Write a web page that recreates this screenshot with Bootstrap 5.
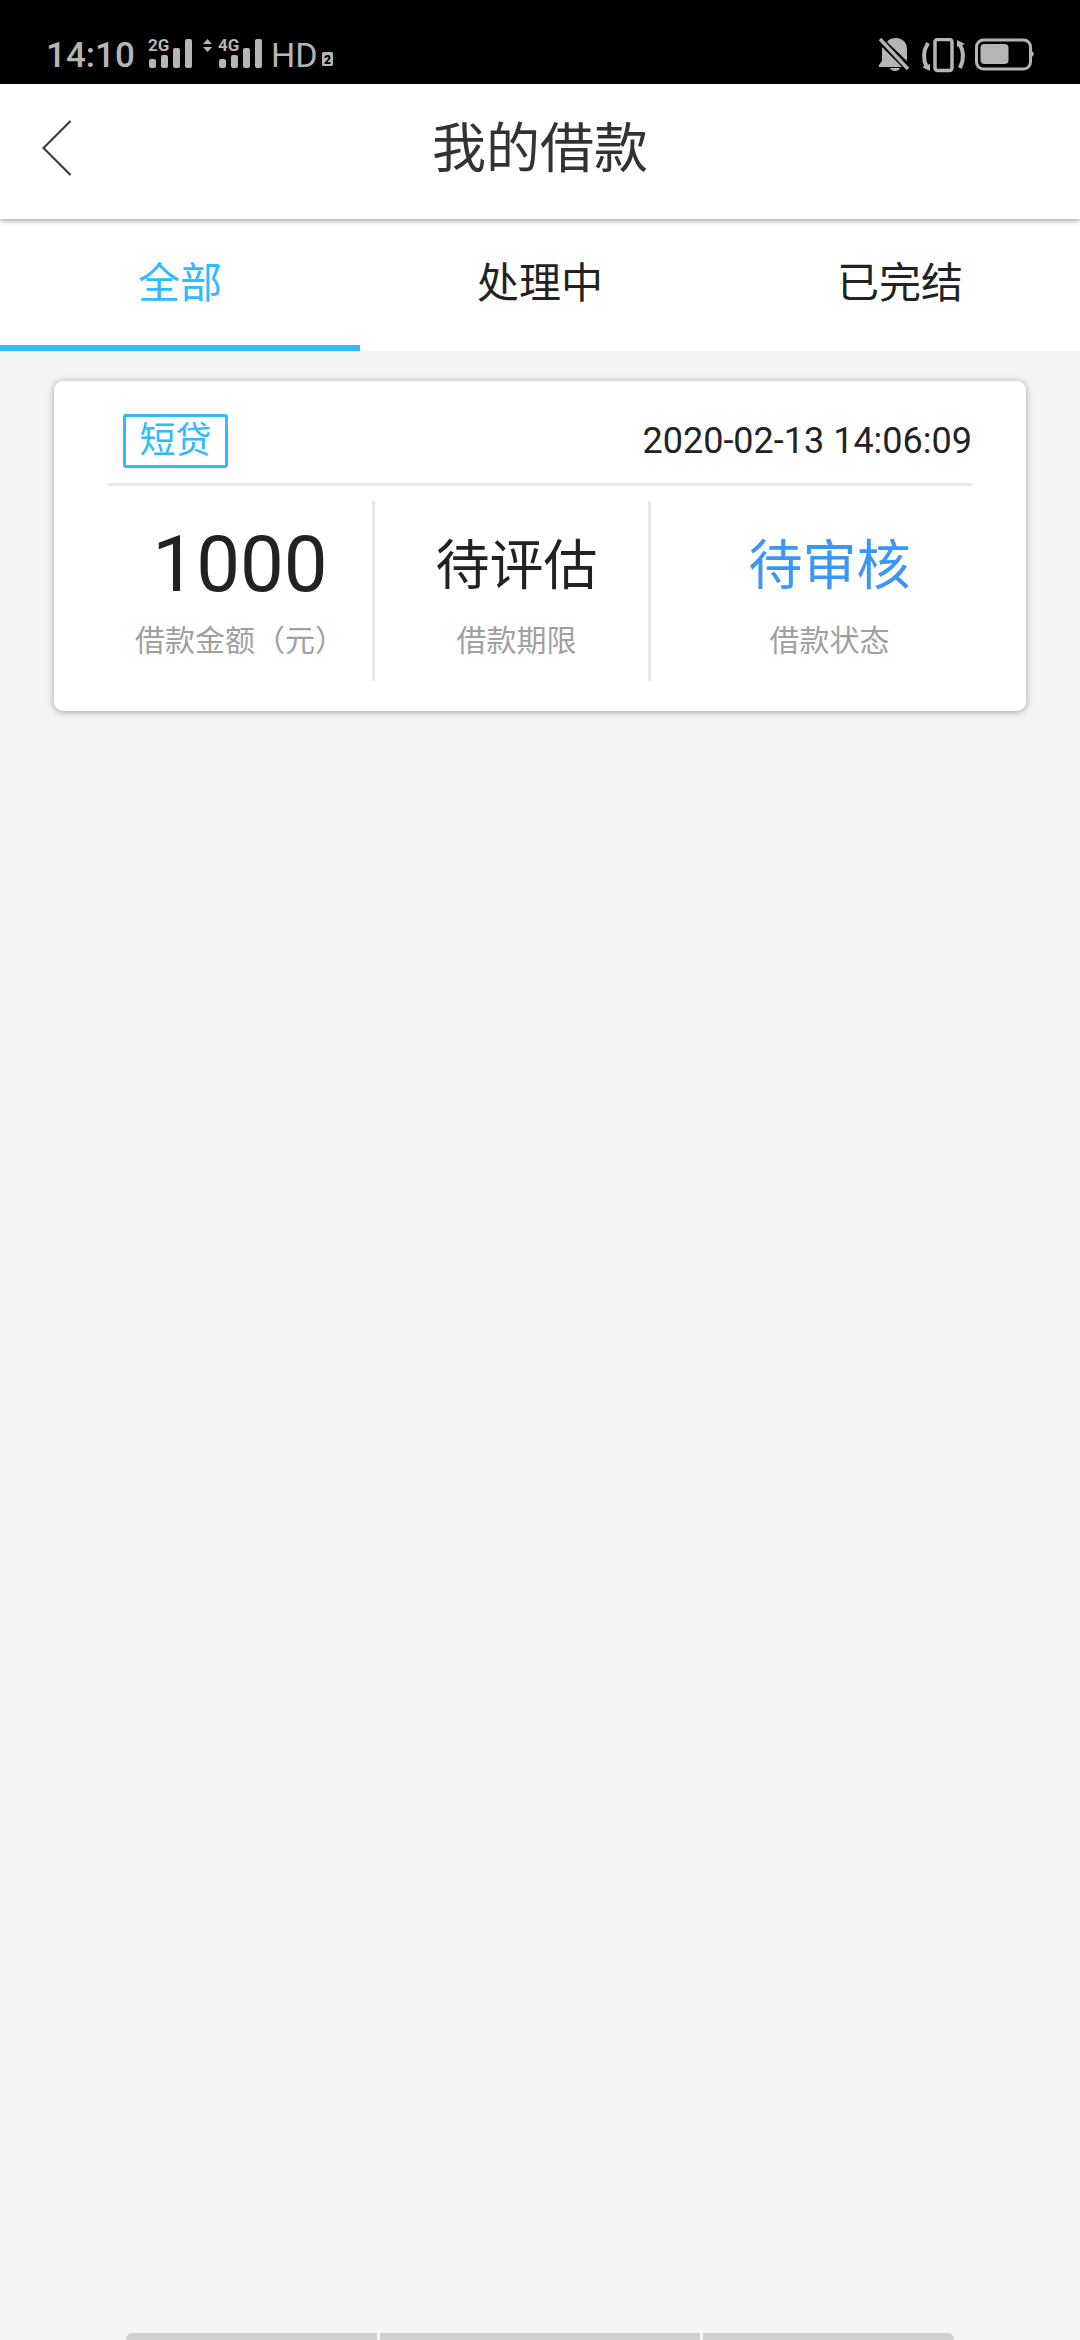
<!DOCTYPE html>
<html lang="zh-CN">
<head>
  <meta charset="UTF-8">
  <title>我的借款</title>
  <meta name="viewport" content="width=device-width, initial-scale=1">
  <link href="https://cdn.jsdelivr.net/npm/bootstrap@5.3.0/dist/css/bootstrap.min.css" rel="stylesheet">
  <style>
    body {
      background-color: #f4f4f4;
      font-family: Roboto, "Noto Sans CJK SC", sans-serif;
      height: 2340px;
      overflow: hidden;
    }
    .status-bar {
      height: 84px;
      background-color: #000;
      color: #b5b5b5;
      padding: 38px 45px 0 46px;
    }
    .status-time {
      font-size: 35px;
      font-weight: 500;
      line-height: 35px;
      width: 102px;
    }
    .signal-icon {
      margin-top: -10px;
    }
    .signal-next {
      margin-left: 6px;
    }
    .status-hd {
      font-size: 34px;
      line-height: 35px;
      margin-left: 8px;
    }
    .title-bar {
      height: 135px;
      background-color: #fff;
      box-shadow: 0 2px 5px rgba(0,0,0,.35);
      z-index: 2;
    }
    .back-btn {
      left: 42px;
      top: 36px;
    }
    .title-text {
      font-size: 54px;
      color: #333;
      line-height: 1;
      margin-top: -3px;
    }
    .tab-bar {
      height: 132px;
      background-color: #fff;
    }
    .tab-item {
      width: 360px;
      font-size: 42px;
      line-height: 1;
      color: #222;
      padding-top: 3px;
      border-bottom: 6px solid transparent;
    }
    .tab-item.on {
      color: #30bbff;
      border-bottom-color: #30bbff;
    }
    .loan-box {
      margin: 30px 54px 0;
      padding: 33px 54px 30px;
      background-color: #fff;
      border-radius: 9px;
      box-shadow: 0 1px 7px rgba(0,0,0,.35);
    }
    .loan-head {
      padding-bottom: 15px;
      border-bottom: 3px solid #ebebeb;
    }
    .loan-tag {
      margin-left: 15px;
      width: 105px;
      height: 54px;
      border: 3px solid #30bbff;
      border-radius: 3px;
      color: #30bbff;
      font-size: 36px;
      line-height: 1;
    }
    .loan-date {
      font-size: 36px;
      color: #222;
      line-height: 1;
      margin-top: 0;
    }
    .loan-stats {
      margin-top: 15px;
      height: 180px;
    }
    .stat-a { width: 267px; border-right: 3px solid #e8e8e8; padding-top: 20px; }
    .stat-b { width: 276px; border-right: 3px solid #e8e8e8; padding-top: 20px; padding-left: 10px; }
    .stat-c { width: 321px; padding-top: 20px; padding-left: 36px; }
    .stat-value {
      height: 88px;
      font-size: 54px;
      line-height: 92px;
      color: #222;
    }
    .stat-value.num {
      font-size: 78px;
      line-height: 88px;
    }
    .stat-value.wait {
      color: #3d96f5;
    }
    .stat-label {
      margin-top: 14px;
      font-size: 30px;
      line-height: 1.2;
      color: #a0a0a0;
    }
    .nav-hint {
      bottom: 0;
      left: 126px;
      gap: 3px;
    }
    .nav-hint span {
      height: 7px;
      background-color: #d0d0d0;
    }
    .nav-hint span:first-child {
      width: 251px;
      border-top-left-radius: 6px;
    }
    .nav-hint span:nth-child(2) {
      width: 320px;
    }
    .nav-hint span:last-child {
      width: 251px;
      border-top-right-radius: 6px;
    }
  </style>
</head>
<body>

<div class="status-bar d-flex align-items-start">
  <div class="status-time">14:10</div>
  <svg width="45" height="42" viewBox="0 -10 45 42" fill="#b5b5b5" class="signal-icon d-block">
    <text x="0" y="13" font-family="Roboto" font-weight="700" font-size="17">2G</text>
    <rect x="1" y="21" width="7" height="9" rx="2"/>
    <rect x="13" y="17" width="7" height="13" rx="2"/>
    <rect x="25" y="10" width="7" height="20" rx="2"/>
    <rect x="37" y="1" width="7" height="29" rx="2"/>
  </svg>
  <svg width="64" height="42" viewBox="0 -10 64 42" fill="#b5b5b5" class="signal-icon signal-next d-block">
    <polygon points="4,6 13,6 8.500,1"/>
    <polygon points="4,9 13,9 8.500,14"/>
    <text x="19" y="13" font-family="Roboto" font-weight="700" font-size="17">4G</text>
    <rect x="20" y="21" width="7" height="9" rx="2"/>
    <rect x="32" y="17" width="7" height="13" rx="2"/>
    <rect x="44" y="10" width="7" height="20" rx="2"/>
    <rect x="56" y="1" width="7" height="29" rx="2"/>
  </svg>
  <div class="status-hd">HD</div>
  <svg width="12" height="30" viewBox="0 0 12 30" class="d-block ms-1">
    <rect x="0" y="14" width="11" height="14" rx="1.500" fill="#b5b5b5"/>
    <text x="5.500" y="26" text-anchor="middle" font-family="Roboto" font-weight="900" font-size="12" fill="#000">2</text>
  </svg>
  <svg width="156" height="36" viewBox="0 0 156 36" fill="none" class="d-block ms-auto">
    <!-- bell with slash -->
    <path d="M8 4C10 1 13 0 17 0C24 0 28 5 28 11V23Z M3 9V23L0 27V29H23Z M11 30H21C20 34 12 34 11 30Z" fill="#b5b5b5"/>
    <path d="M1 1L29 31" stroke="#b5b5b5" stroke-width="3.500"/>
    <!-- vibrate -->
    <rect x="56" y="1.500" width="17" height="31" rx="2.500" stroke="#b5b5b5" stroke-width="3.500"/>
    <path d="M49 5C44 13 44 22 48 30" stroke="#b5b5b5" stroke-width="4"/>
    <path d="M43 29L51 33V26Z" fill="#b5b5b5"/>
    <path d="M80 5C85 13 85 22 81 30" stroke="#b5b5b5" stroke-width="4"/>
    <path d="M86 6L78 2V9Z" fill="#b5b5b5"/>
    <!-- battery -->
    <rect x="97.500" y="2" width="54" height="29" rx="7" stroke="#b5b5b5" stroke-width="3"/>
    <rect x="101.500" y="6" width="28" height="20" rx="4" fill="#b5b5b5"/>
    <path d="M152.500 13C155.500 14 155.500 18 152.500 19Z" fill="#b5b5b5"/>
  </svg>
</div>

<div class="title-bar position-relative d-flex justify-content-center align-items-center">
  <svg class="back-btn position-absolute d-block" width="30" height="56" viewBox="0 0 30 56" fill="none">
    <path d="M28.500 1L1.500 28L28.500 55" stroke="#333" stroke-width="2"/>
  </svg>
  <div class="title-text">我的借款</div>
</div>

<div class="tab-bar d-flex">
  <div class="tab-item on d-flex justify-content-center align-items-center">全部</div>
  <div class="tab-item d-flex justify-content-center align-items-center">处理中</div>
  <div class="tab-item d-flex justify-content-center align-items-center">已完结</div>
</div>

<div class="loan-box">
  <div class="loan-head d-flex justify-content-between align-items-center">
    <div class="loan-tag d-flex justify-content-center align-items-center">短贷</div>
    <div class="loan-date">2020-02-13 14:06:09</div>
  </div>
  <div class="loan-stats d-flex text-center">
    <div class="stat-a">
      <div class="stat-value num">1000</div>
      <div class="stat-label">借款金额（元）</div>
    </div>
    <div class="stat-b">
      <div class="stat-value">待评估</div>
      <div class="stat-label">借款期限</div>
    </div>
    <div class="stat-c">
      <div class="stat-value wait">待审核</div>
      <div class="stat-label">借款状态</div>
    </div>
  </div>
</div>

<div class="nav-hint position-absolute d-flex">
  <span></span><span></span><span></span>
</div>

<script src="https://cdn.jsdelivr.net/npm/bootstrap@5.3.0/dist/js/bootstrap.bundle.min.js"></script>
</body>
</html>
